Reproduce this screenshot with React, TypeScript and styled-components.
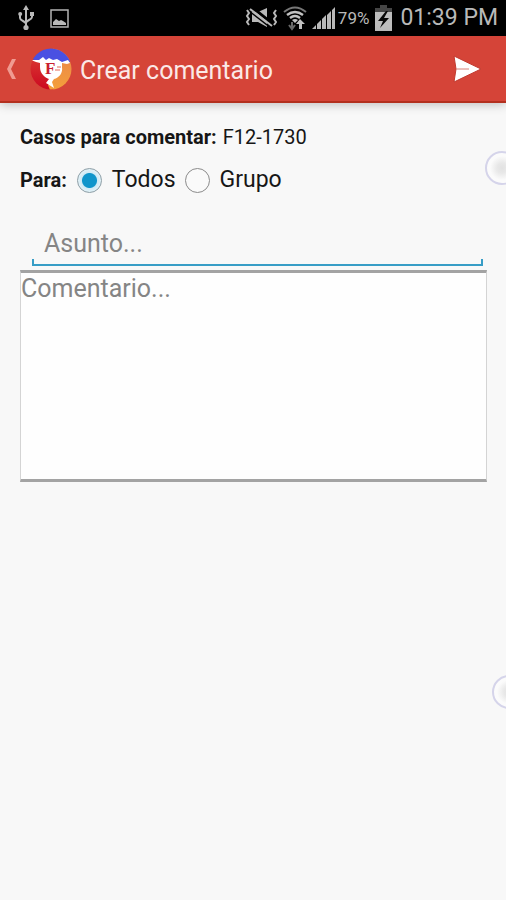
import React, { useState } from "react";
import styled, { createGlobalStyle } from "styled-components";

const GlobalStyle = createGlobalStyle`
  *, *::before, *::after { box-sizing: border-box; }
  body { margin: 0; background: #f8f8f8; font-family: Roboto, sans-serif; color: #161616; }
  h1, p { margin: 0; font-weight: 400; }
  button, input, textarea { font: inherit; color: inherit; }
`;

const Screen = styled.div`
  position: relative;
  display: flex;
  flex-direction: column;
  min-height: 100vh;
  overflow: hidden;
  background: #f8f8f8;
`;

const StatusBar = styled.div`
  display: flex;
  align-items: center;
  height: 36px;
  padding: 0 8px 0 18px;
  background: #000;
  color: #b9b9b9;
`;

const StatusGroup = styled.div<{ $end?: boolean; $gap: number }>`
  display: flex;
  align-items: center;
  gap: ${(p) => p.$gap}px;
  margin-left: ${(p) => (p.$end ? "auto" : "0")};
`;

const Percent = styled.span`
  font-size: 17px;
  line-height: 36px;
`;

const Clock = styled.time`
  font-size: 23px;
  line-height: 36px;
  padding-left: 2px;
`;

const ActionBar = styled.header`
  display: flex;
  align-items: center;
  height: 67px;
  padding: 0 20px 0 2px;
  background: #d54438;
  border-bottom: 2px solid #b3301f;
  box-shadow: 0 1px 10px rgba(0, 0, 0, 0.26);
`;

const IconButton = styled.button`
  display: flex;
  align-items: center;
  padding: 0;
  border: 0;
  background: none;
  cursor: pointer;
`;

const Brand = styled.span`
  display: flex;
  margin-left: 8px;
`;

const LogoLetter = styled.text`
  font-family: "Liberation Serif", serif;
  font-size: 17px;
  font-weight: 700;
  fill: #c92030;
`;

const Title = styled.h1`
  flex: 1;
  padding: 4px 0 0 8px;
  font-size: 25px;
  line-height: 32px;
  color: #fbe9e7;
`;

const Form = styled.form`
  display: flex;
  flex-direction: column;
  padding: 20px 19px 0 20px;
`;

const Cases = styled.p`
  font-size: 20px;
  line-height: 28px;
`;

const Recipients = styled.fieldset`
  display: flex;
  align-items: center;
  height: 40px;
  margin: 9px 0 0;
  padding: 4px 0 0;
  border: 0;
`;

const Strong = styled.span<{ $spaced?: boolean }>`
  font-size: 20px;
  font-weight: 700;
  margin-right: ${(p) => (p.$spaced ? 10 : 6)}px;
`;

const Option = styled.label`
  display: flex;
  align-items: center;
  gap: 10px;
  margin-right: 9px;
  font-size: 23px;
  line-height: 32px;
`;

const Radio = styled.input`
  appearance: none;
  width: 25px;
  height: 25px;
  margin: 0;
  border: 1px solid #8b8b8b;
  border-radius: 50%;
  background: #fafafa;
  &:checked {
    border-color: #8d9ea6;
    background: radial-gradient(circle, #0f95cb 7px, #cfeaf5 8px, #e6f3f8 12px);
  }
`;

const SubjectFrame = styled.div`
  position: relative;
  margin: 25px 4px 0 12px;
  &::after {
    content: "";
    position: absolute;
    inset: auto 0 0 0;
    height: 7px;
    border: 2px solid #379dc6;
    border-top: 0;
    pointer-events: none;
  }
`;

const Subject = styled.input`
  display: block;
  width: 100%;
  height: 41px;
  padding: 0 12px 5px;
  border: 0;
  outline: 0;
  background: transparent;
  font-size: 25px;
  &::placeholder { color: #858585; opacity: 1; }
`;

const Comment = styled.textarea`
  display: block;
  width: 100%;
  height: 212px;
  margin-top: 4px;
  padding: 1px 0 0;
  border: 1px solid #d4d4d4;
  border-top: 3px solid #a3a3a3;
  border-bottom: 3px solid #a3a3a3;
  border-radius: 0;
  outline: 0;
  resize: none;
  background: #fefefe;
  font-size: 25px;
  line-height: 30px;
  &::placeholder { color: #858585; opacity: 1; }
`;

const EdgeHandle = styled.span<{ $top: number; $right: number }>`
  position: absolute;
  top: ${(p) => p.$top}px;
  right: ${(p) => p.$right}px;
  width: 34px;
  height: 34px;
  border: 2px solid #d5d4ea;
  border-radius: 50%;
  background: radial-gradient(circle, #e2e2e2 0, #e8e8e8 5px, #fbfbfb 12px);
`;

const UsbIcon = () => (
  <svg width="17" height="26" viewBox="0 0 17 26" fill="none" stroke="#b9b9b9" strokeWidth="2" aria-hidden="true">
    <path d="M8 4v18M2 10v3c0 3 6 3 6 6M14 10v2c0 3-6 3-6 6" />
    <path d="M8 0l3 5H5z" fill="#b9b9b9" stroke="none" />
    <circle cx="8" cy="22.500" r="2.600" fill="#b9b9b9" stroke="none" />
    <circle cx="2.200" cy="9" r="2" fill="#b9b9b9" stroke="none" />
    <path d="M12 7h4v4h-4z" fill="#b9b9b9" stroke="none" />
  </svg>
);

const PictureIcon = () => (
  <svg width="20" height="19" viewBox="0 0 20 19" aria-hidden="true">
    <rect x="1" y="1" width="17" height="17" fill="none" stroke="#b4b4b4" strokeWidth="1.500" />
    <path d="M3 16v-3l3-3 3 2 2-1 2 1 3 2v2z" fill="#b9b9b9" />
  </svg>
);

const MuteIcon = () => (
  <svg width="33" height="20" viewBox="0 0 33 20" aria-hidden="true">
    <path d="M7 4h6l9-4v19l-9-5H7z" fill="#b9b9b9" />
    <path d="M8 0l21 17" stroke="#000" strokeWidth="3" />
    <path d="M5 1l22 17" stroke="#b9b9b9" strokeWidth="2" />
    <path d="M4 3l22 17" stroke="#000" strokeWidth="1.500" />
    <path d="M2 2l2 3-2 3 2 3-2 3 2 3M31 2l-2 3 2 3-2 3 2 3-2 3" fill="none" stroke="#b9b9b9" strokeWidth="2" />
  </svg>
);

const WifiIcon = () => (
  <svg width="24" height="26" viewBox="0 0 24 26" fill="none" aria-hidden="true">
    <path d="M1 7q11-9 22 0" stroke="#777" strokeWidth="2" />
    <path d="M4 10q8-6 16 0M7 13q5-4 10 0" stroke="#c2c2c2" strokeWidth="2.400" />
    <path d="M9 15q3-2 6 0l-3 3z" fill="#c2c2c2" />
    <path d="M17 14l-4 5h3v5h3v-5h3z" fill="#c2c2c2" />
    <path d="M9 17v6M6 20l3 4 3-4" stroke="#696969" strokeWidth="2" />
  </svg>
);

const SignalIcon = () => (
  <svg width="24" height="24" viewBox="0 0 24 24" fill="#b9b9b9" aria-hidden="true">
    <path d="M0 23l4-4v4zM5 18l4-4v9H5zM10 13l4-4v14h-4zM15 9l4-4v18h-4zM20 4l3-3v22h-3z" />
  </svg>
);

const BatteryIcon = () => (
  <svg width="19" height="27" viewBox="0 0 19 27" aria-hidden="true">
    <path d="M6 0h7v3h5v5H1V3h5z" fill="#454545" />
    <path d="M1 7h17v19H1z" fill="#bdbdbd" />
    <path d="M12 6L4 16h5l-3 7 9-10h-5l4-7z" fill="#080808" />
  </svg>
);

const BackIcon = () => (
  <svg width="20" height="26" viewBox="0 0 20 26" fill="#f09b91" aria-hidden="true">
    <path d="M10 3h4L9 13l5 10h-4L5 13z" />
  </svg>
);

const Logo = () => (
  <svg width="42" height="42" viewBox="0 0 42 42" aria-hidden="true">
    <defs>
      <clipPath id="disc"><circle cx="21" cy="21" r="20.500" /></clipPath>
      <linearGradient id="amber" x1="0" y1="0" x2="0" y2="1">
        <stop offset="0" stopColor="#e9824c" />
        <stop offset="1" stopColor="#f4a03a" />
      </linearGradient>
      <linearGradient id="crimson" x1="0" y1="0" x2="0" y2="1">
        <stop offset="0" stopColor="#dd4436" />
        <stop offset="1" stopColor="#cb0720" />
      </linearGradient>
    </defs>
    <g clipPath="url(#disc)">
      <path d="M0 0h23v42H0z" fill="url(#crimson)" />
      <path d="M23 0h19v42H20l-2-5 5-5z" fill="url(#amber)" />
      <path d="M2 0h38v14l-5 1-25-1-8-3z" fill="#4a50e2" />
      <path d="M1 12l8 0 4-3 3 3 3-2 4 2 4-1 5 3 6-2 2 3-3 1-5-1 0 4c1 6-3 11-8 12l-2 3 2 6-8-5 3-4c-5-2-9-6-9-12l0-4-4-1z" fill="#fff" />
    </g>
    <path d="M25 21h5v2h-5zM27 18h4v2h-4z" fill="#f1b4ac" />
    <LogoLetter x="15" y="26">F</LogoLetter>
  </svg>
);

const SendIcon = () => (
  <svg width="34" height="32" viewBox="0 0 34 32" aria-hidden="true">
    <path d="M2 3l27 13L2 29l2-13z" fill="#fff" stroke="#c23a2f" strokeWidth="1" />
    <path d="M4 16h13" stroke="#d88078" strokeWidth="1" />
  </svg>
);

const audiences = ["Todos", "Grupo"];

export default function App() {
  const [audience, setAudience] = useState("Todos");
  return (
    <>
      <GlobalStyle />
      <Screen>
        <StatusBar>
          <StatusGroup $gap={15}>
            <UsbIcon />
            <PictureIcon />
          </StatusGroup>
          <StatusGroup $end $gap={5}>
            <MuteIcon />
            <WifiIcon />
            <StatusGroup $gap={2}>
              <SignalIcon />
              <Percent>79%</Percent>
            </StatusGroup>
            <BatteryIcon />
            <Clock>01:39 PM</Clock>
          </StatusGroup>
        </StatusBar>
        <ActionBar>
          <IconButton type="button" aria-label="Volver">
            <BackIcon />
          </IconButton>
          <Brand>
            <Logo />
          </Brand>
          <Title>Crear comentario</Title>
          <IconButton type="submit" form="comment-form" aria-label="Enviar">
            <SendIcon />
          </IconButton>
        </ActionBar>
        <Form id="comment-form" onSubmit={(e) => e.preventDefault()}>
          <Cases>
            <Strong>Casos para comentar:</Strong>
            F12-1730
          </Cases>
          <Recipients aria-labelledby="recipients-label">
            <Strong id="recipients-label" $spaced>Para:</Strong>
            {audiences.map((name) => (
              <Option key={name}>
                <Radio
                  type="radio"
                  name="audience"
                  value={name}
                  checked={audience === name}
                  onChange={() => setAudience(name)}
                />
                {name}
              </Option>
            ))}
          </Recipients>
          <SubjectFrame>
            <Subject type="text" aria-label="Asunto" placeholder="Asunto..." />
          </SubjectFrame>
          <Comment aria-label="Comentario" placeholder="Comentario..." />
        </Form>
        <EdgeHandle $top={151} $right={-13} />
        <EdgeHandle $top={675} $right={-20} />
      </Screen>
    </>
  );
}
